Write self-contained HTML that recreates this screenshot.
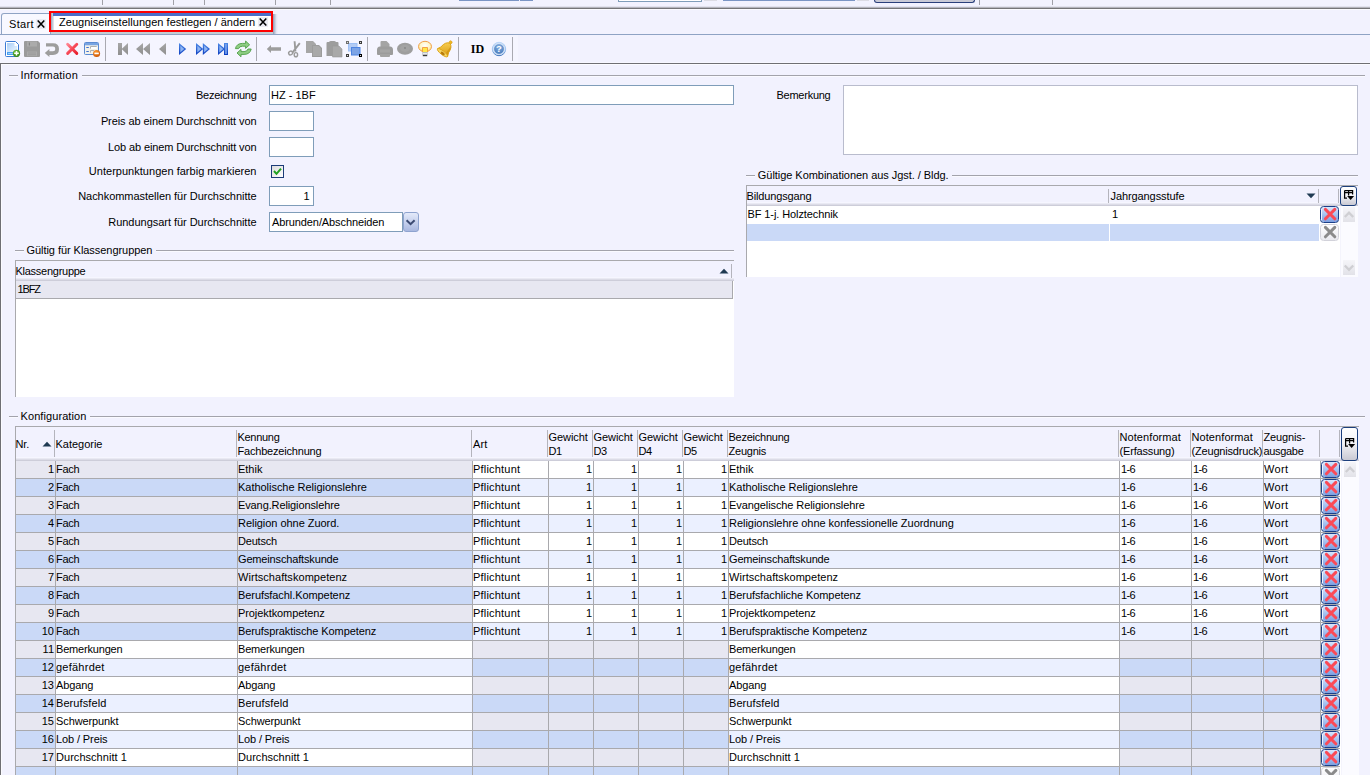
<!DOCTYPE html>
<html><head><meta charset="utf-8"><title>Zeugniseinstellungen</title>
<style>
html,body{margin:0;padding:0;}
body{width:1370px;height:775px;overflow:hidden;position:relative;background:#f2f2fe;font-family:"Liberation Sans",sans-serif;font-size:11px;line-height:13px;color:#000;}
.t{position:absolute;white-space:nowrap;height:13px;line-height:13px;font-size:11px;}
svg{position:absolute;overflow:visible;}
</style></head><body>
<div style="position:absolute;left:102px;top:0px;width:1px;height:5px;background:#a0a0a8;"></div>
<div style="position:absolute;left:173px;top:0px;width:1px;height:5px;background:#a0a0a8;"></div>
<div style="position:absolute;left:204px;top:0px;width:1px;height:5px;background:#a0a0a8;"></div>
<div style="position:absolute;left:275px;top:0px;width:1px;height:5px;background:#a0a0a8;"></div>
<div style="position:absolute;left:330px;top:0px;width:1px;height:5px;background:#a0a0a8;"></div>
<div style="position:absolute;left:979px;top:0px;width:1px;height:5px;background:#a0a0a8;"></div>
<div style="position:absolute;left:1052px;top:0px;width:1px;height:5px;background:#a0a0a8;"></div>
<div style="position:absolute;left:459px;top:0px;width:60px;height:1px;background:#7b95c4;"></div>
<div style="position:absolute;left:520px;top:0px;width:13px;height:1px;background:#7b95c4;"></div>
<div style="position:absolute;left:618px;top:0px;width:84px;height:2px;background:#fff;border:1px solid #7f9db9;border-top:0;box-sizing:border-box;"></div>
<div style="position:absolute;left:704px;top:0px;width:13px;height:1px;background:#dcdce4;"></div>
<div style="position:absolute;left:723px;top:0px;width:132px;height:1px;background:#7b95c4;"></div>
<div style="position:absolute;left:857px;top:0px;width:12px;height:1px;background:#dcdce4;"></div>
<div style="position:absolute;left:874px;top:0px;width:101px;height:3px;background:#c9cad6;border:1px solid #2a3f7a;border-top:0;border-radius:0 0 3px 3px;box-sizing:border-box;"></div>
<div style="position:absolute;left:0px;top:6px;width:1370px;height:1px;background:#e2e2ee;"></div>
<div style="position:absolute;left:0px;top:7px;width:1370px;height:1px;background:#b4b4bc;"></div>
<div style="position:absolute;left:0px;top:8px;width:1370px;height:1px;background:#757578;"></div>
<div style="position:absolute;left:0px;top:9px;width:1370px;height:1px;background:#fafaff;"></div>
<div style="position:absolute;left:0px;top:34px;width:1370px;height:1px;background:#8fa3c4;"></div>
<div style="position:absolute;left:1px;top:13px;width:50px;height:21px;background:#f8f8ff;border:1px solid #8fa3c4;border-bottom:0;border-radius:3px 0 0 0;box-sizing:border-box;"></div>
<div class="t" style="left:9px;top:18px;letter-spacing:0.350px;">Start</div>
<div style="position:absolute;left:51px;top:13px;width:222px;height:21px;background:#fff;"></div>
<div style="position:absolute;left:51px;top:13px;width:3px;height:21px;background:linear-gradient(90deg,#9aa6b8,#e8ecf2);"></div>
<div style="position:absolute;left:53px;top:13px;width:220px;height:3px;background:#4c6fc9;"></div>
<div style="position:absolute;left:51px;top:32px;width:224px;height:2px;background:#c3cdd4;"></div>
<div style="position:absolute;left:273px;top:14px;width:5px;height:20px;background:linear-gradient(90deg,#8e9ab4 0%,#bcc3d6 35%,#e4e6f4 70%,#f2f2fe 100%);"></div>
<div class="t" style="left:59px;top:16px;letter-spacing:0.027px;">Zeugniseinstellungen festlegen / ändern</div>
<div style="position:absolute;left:49px;top:11px;width:224px;height:21px;background:transparent;border:2px solid #fe0000;box-sizing:border-box;"></div>
<div style="position:absolute;left:0px;top:35px;width:518px;height:27px;background:#f5f5ff;"></div>
<div style="position:absolute;left:0px;top:62px;width:1370px;height:1px;background:#f7f7ff;"></div>
<div style="position:absolute;left:105px;top:37px;width:1px;height:24px;background:#a9a9b1;"></div>
<div style="position:absolute;left:256px;top:37px;width:1px;height:24px;background:#a9a9b1;"></div>
<div style="position:absolute;left:367px;top:37px;width:1px;height:24px;background:#a9a9b1;"></div>
<div style="position:absolute;left:458px;top:37px;width:1px;height:24px;background:#a9a9b1;"></div>
<div style="position:absolute;left:512px;top:37px;width:1px;height:24px;background:#a9a9b1;"></div>
<div style="position:absolute;left:0px;top:63px;width:1370px;height:1px;background:#6f6f73;"></div>
<div style="position:absolute;left:0px;top:63px;width:1px;height:712px;background:#6f6f73;"></div>
<div style="position:absolute;left:1px;top:64px;width:1369px;height:1px;background:#fbfbff;"></div>
<div style="position:absolute;left:1px;top:64px;width:1px;height:711px;background:#fbfbff;"></div>
<div style="position:absolute;left:9px;top:75px;width:9px;height:1px;background:#a3a3ab;"></div>
<div class="t" style="left:20.5px;top:69px;letter-spacing:0.222px;">Information</div>
<div style="position:absolute;left:82px;top:75px;width:1283px;height:1px;background:#a3a3ab;"></div>
<div style="position:absolute;left:82px;top:76px;width:1283px;height:1px;background:#fafaff;"></div>
<div style="position:absolute;left:9px;top:76px;width:9px;height:1px;background:#fafaff;"></div>
<div style="position:absolute;left:15px;top:250px;width:9px;height:1px;background:#a3a3ab;"></div>
<div class="t" style="left:26.5px;top:244px;letter-spacing:-0.051px;">Gültig für Klassengruppen</div>
<div style="position:absolute;left:156px;top:250px;width:578px;height:1px;background:#a3a3ab;"></div>
<div style="position:absolute;left:156px;top:251px;width:578px;height:1px;background:#fafaff;"></div>
<div style="position:absolute;left:15px;top:251px;width:9px;height:1px;background:#fafaff;"></div>
<div style="position:absolute;left:9px;top:416px;width:9px;height:1px;background:#a3a3ab;"></div>
<div class="t" style="left:20.5px;top:410px;letter-spacing:0.087px;">Konfiguration</div>
<div style="position:absolute;left:90px;top:416px;width:1275px;height:1px;background:#a3a3ab;"></div>
<div style="position:absolute;left:90px;top:417px;width:1275px;height:1px;background:#fafaff;"></div>
<div style="position:absolute;left:9px;top:417px;width:9px;height:1px;background:#fafaff;"></div>
<div style="position:absolute;left:746px;top:175px;width:9px;height:1px;background:#a3a3ab;"></div>
<div class="t" style="left:757.8px;top:169px;letter-spacing:-0.046px;">Gültige Kombinationen aus Jgst. / Bldg.</div>
<div style="position:absolute;left:952px;top:175px;width:406px;height:1px;background:#a3a3ab;"></div>
<div style="position:absolute;left:952px;top:176px;width:406px;height:1px;background:#fafaff;"></div>
<div style="position:absolute;left:746px;top:176px;width:9px;height:1px;background:#fafaff;"></div>
<div class="t" style="right:1113.5px;top:89px;letter-spacing:-0.287px;">Bezeichnung</div>
<div class="t" style="right:1113.5px;top:115px;letter-spacing:-0.088px;">Preis ab einem Durchschnitt von</div>
<div class="t" style="right:1113.5px;top:141px;letter-spacing:-0.112px;">Lob ab einem Durchschnitt von</div>
<div class="t" style="right:1113.5px;top:165px;letter-spacing:0.024px;">Unterpunktungen farbig markieren</div>
<div class="t" style="right:1113.5px;top:190px;letter-spacing:-0.042px;">Nachkommastellen für Durchschnitte</div>
<div class="t" style="right:1113.5px;top:216px;letter-spacing:-0.034px;">Rundungsart für Durchschnitte</div>
<div style="position:absolute;left:269px;top:85px;width:465px;height:20px;background:#fff;border:1px solid #7f9db9;box-sizing:border-box;"></div>
<div class="t" style="left:271px;top:89px;">HZ - 1BF</div>
<div style="position:absolute;left:269px;top:111px;width:45px;height:20px;background:#fff;border:1px solid #7f9db9;box-sizing:border-box;"></div>
<div style="position:absolute;left:269px;top:137px;width:45px;height:20px;background:#fff;border:1px solid #7f9db9;box-sizing:border-box;"></div>
<div style="position:absolute;left:271px;top:165px;width:13px;height:13px;background:linear-gradient(135deg,#dcdcdc,#fff);border:1px solid #1c3c78;box-sizing:border-box;"></div>
<svg style="left:271px;top:165px" width="13" height="13"><path d="M3 6 L5.5 8.8 L10 3.6" fill="none" stroke="#21a121" stroke-width="2"/></svg>
<div style="position:absolute;left:269px;top:186px;width:45px;height:20px;background:#fff;border:1px solid #7f9db9;box-sizing:border-box;"></div>
<div class="t" style="right:1060.4px;top:190px;">1</div>
<div style="position:absolute;left:269px;top:212px;width:134px;height:20px;background:#fff;border:1px solid #7f9db9;box-sizing:border-box;"></div>
<div class="t" style="left:272px;top:216px;letter-spacing:-0.103px;">Abrunden/Abschneiden</div>
<div style="position:absolute;left:403px;top:212px;width:16px;height:20px;background:linear-gradient(180deg,#e4eafa,#a9b8e0);border:1px solid #8ea3cf;border-radius:3px;box-sizing:border-box;"></div>
<svg style="left:403px;top:212px" width="16" height="20"><path d="M3.6 8.2 L7.6 12.2 L11.6 8.2" fill="none" stroke="#3b4a72" stroke-width="2"/></svg>
<div class="t" style="left:776.5px;top:89px;letter-spacing:-0.253px;">Bemerkung</div>
<div style="position:absolute;left:843px;top:85px;width:515px;height:70px;background:#fff;border:1px solid #b9bccd;box-sizing:border-box;"></div>
<div style="position:absolute;left:15px;top:260px;width:719px;height:137px;background:#fff;"></div>
<div style="position:absolute;left:15px;top:260px;width:1px;height:137px;background:#a9a9ad;"></div>
<div style="position:absolute;left:15px;top:260px;width:719px;height:1px;background:#a9a9ad;"></div>
<div style="position:absolute;left:15px;top:261px;width:719px;height:16px;background:#f2f2fe;"></div>
<div style="position:absolute;left:15px;top:277px;width:719px;height:1px;background:#f6f6ff;"></div>
<div style="position:absolute;left:15px;top:278px;width:719px;height:1px;background:#e9e9f3;"></div>
<div style="position:absolute;left:15px;top:279px;width:719px;height:1px;background:#dcdce7;"></div>
<div style="position:absolute;left:15px;top:280px;width:719px;height:1px;background:#cdcdd9;"></div>
<div style="position:absolute;left:15px;top:260px;width:1px;height:21px;background:#a9a9ad;"></div>
<div class="t" style="left:15.5px;top:265px;letter-spacing:-0.264px;">Klassengruppe</div>
<div style="position:absolute;left:731px;top:264px;width:1px;height:14px;background:#b4b4bc;"></div>
<svg style="left:719px;top:268px" width="10" height="6"><path d="M0.5 5.5 L5 0.8 L9.5 5.5 Z" fill="#1f3a52"/></svg>
<div style="position:absolute;left:16px;top:281px;width:717px;height:17px;background:#e7e7f1;"></div>
<div style="position:absolute;left:16px;top:298px;width:717px;height:1px;background:#a9a9ad;"></div>
<div style="position:absolute;left:732px;top:281px;width:1px;height:18px;background:#a9a9ad;"></div>
<div class="t" style="left:17.5px;top:283px;letter-spacing:-1.152px;">1BFZ</div>
<div style="position:absolute;left:746px;top:185px;width:612px;height:92px;background:#fff;"></div>
<div style="position:absolute;left:746px;top:185px;width:612px;height:1px;background:#a9a9ad;"></div>
<div style="position:absolute;left:746px;top:186px;width:612px;height:16px;background:#f2f2fe;"></div>
<div style="position:absolute;left:746px;top:202px;width:612px;height:1px;background:#f6f6ff;"></div>
<div style="position:absolute;left:746px;top:203px;width:612px;height:1px;background:#e9e9f3;"></div>
<div style="position:absolute;left:746px;top:204px;width:612px;height:1px;background:#dcdce7;"></div>
<div style="position:absolute;left:746px;top:205px;width:612px;height:1px;background:#cdcdd9;"></div>
<div style="position:absolute;left:746px;top:185px;width:1px;height:92px;background:#a9a9ad;"></div>
<div class="t" style="left:746.5px;top:190px;letter-spacing:-0.143px;">Bildungsgang</div>
<div class="t" style="left:1110.5px;top:190px;letter-spacing:-0.092px;">Jahrgangsstufe</div>
<div style="position:absolute;left:1108px;top:189px;width:1px;height:14px;background:#b4b4bc;"></div>
<div style="position:absolute;left:1318px;top:189px;width:1px;height:14px;background:#b4b4bc;"></div>
<div style="position:absolute;left:1338px;top:189px;width:1px;height:14px;background:#b4b4bc;"></div>
<svg style="left:1306px;top:193px" width="10" height="6"><path d="M0.5 0.5 L9.5 0.5 L5 5.2 Z" fill="#1f3a52"/></svg>
<div class="t" style="left:747.5px;top:208px;letter-spacing:-0.097px;">BF 1-j. Holztechnik</div>
<div class="t" style="left:1112px;top:208px;">1</div>
<div style="position:absolute;left:747px;top:224px;width:362px;height:17px;background:#cad9f7;"></div>
<div style="position:absolute;left:1110px;top:224px;width:209px;height:17px;background:#cad9f7;"></div>
<div style="position:absolute;left:1109px;top:206px;width:1px;height:36px;background:#fff;"></div>
<div style="position:absolute;left:1340px;top:186px;width:17px;height:20px;background:linear-gradient(180deg,#ffffff 0%,#f4f4f8 45%,#c9c9d3 100%);border:1px solid #1c3f7c;border-radius:3px;box-sizing:border-box;"></div>
<svg style="left:1344px;top:190px" width="11" height="11"><path d="M0.6 0.6 H8.6 V4.6 M0.6 0.6 V8 H3 M0.6 2.6 H8.6 M4.6 0.6 V5.6" fill="none" stroke="#000" stroke-width="1.25"/><path d="M3.1 6.1 H10.1 L6.6 10 Z" fill="#000"/></svg>
<div style="position:absolute;left:1320px;top:206px;width:19px;height:17px;background:linear-gradient(180deg,#d9e6fc 0%,#a7c2f0 50%,#7c9fe0 100%);border:1px solid #1c4088;border-radius:3.5px;box-sizing:border-box;box-shadow:inset 1px 0 0 #eef4ff;"></div>
<svg style="left:1320px;top:206px" width="19" height="17"><path d="M5.4 3.4 L14.8 12.8 M14.8 3.4 L5.4 12.8" fill="none" stroke="#fb4a56" stroke-width="3" stroke-linecap="round"/></svg>
<div style="position:absolute;left:1320px;top:224px;width:19px;height:17px;background:linear-gradient(180deg,#ffffff,#e9e9ef);border:1px solid #d2d2da;border-radius:3.5px;box-sizing:border-box;"></div>
<svg style="left:1320px;top:224px" width="19" height="17"><path d="M5.4 3.4 L14.8 12.8 M14.8 3.4 L5.4 12.8" fill="none" stroke="#8b8b8b" stroke-width="3" stroke-linecap="round"/></svg>
<div style="position:absolute;left:1340px;top:206px;width:18px;height:71px;background:#fbfbff;"></div>
<div style="position:absolute;left:1340px;top:206px;width:1px;height:71px;background:#f4f4fc;"></div>
<div style="position:absolute;left:1343px;top:207px;width:12px;height:15px;background:linear-gradient(180deg,#f5f5f9,#e2e2e8);"></div>
<svg style="left:1343px;top:207px" width="12" height="15"><path d="M1.8 10 L6 5.6 L10.2 10" fill="none" stroke="#cfcfd3" stroke-width="2.3"/></svg>
<div style="position:absolute;left:1343px;top:260px;width:12px;height:15px;background:linear-gradient(180deg,#f5f5f9,#e2e2e8);"></div>
<svg style="left:1343px;top:260px" width="12" height="15"><path d="M1.8 5.5 L6 9.9 L10.2 5.5" fill="none" stroke="#cfcfd3" stroke-width="2.3"/></svg>
<div style="position:absolute;left:15px;top:426px;width:1343px;height:349px;background:#fff;"></div>
<div style="position:absolute;left:15px;top:426px;width:1344px;height:1px;background:#a9a9ad;"></div>
<div style="position:absolute;left:15px;top:427px;width:1344px;height:30px;background:#f2f2fe;"></div>
<div style="position:absolute;left:15px;top:457px;width:1344px;height:1px;background:#f6f6ff;"></div>
<div style="position:absolute;left:15px;top:458px;width:1344px;height:1px;background:#e9e9f3;"></div>
<div style="position:absolute;left:15px;top:459px;width:1344px;height:1px;background:#dcdce7;"></div>
<div style="position:absolute;left:15px;top:460px;width:1344px;height:1px;background:#cdcdd9;"></div>
<div style="position:absolute;left:15px;top:426px;width:1px;height:349px;background:#a9a9ad;"></div>
<div style="position:absolute;left:54px;top:430px;width:1px;height:27px;background:#b4b4bc;"></div>
<div style="position:absolute;left:236px;top:430px;width:1px;height:27px;background:#b4b4bc;"></div>
<div style="position:absolute;left:471px;top:430px;width:1px;height:27px;background:#b4b4bc;"></div>
<div style="position:absolute;left:547px;top:430px;width:1px;height:27px;background:#b4b4bc;"></div>
<div style="position:absolute;left:592px;top:430px;width:1px;height:27px;background:#b4b4bc;"></div>
<div style="position:absolute;left:637px;top:430px;width:1px;height:27px;background:#b4b4bc;"></div>
<div style="position:absolute;left:682px;top:430px;width:1px;height:27px;background:#b4b4bc;"></div>
<div style="position:absolute;left:727px;top:430px;width:1px;height:27px;background:#b4b4bc;"></div>
<div style="position:absolute;left:1118px;top:430px;width:1px;height:27px;background:#b4b4bc;"></div>
<div style="position:absolute;left:1190px;top:430px;width:1px;height:27px;background:#b4b4bc;"></div>
<div style="position:absolute;left:1262px;top:430px;width:1px;height:27px;background:#b4b4bc;"></div>
<div style="position:absolute;left:1319px;top:430px;width:1px;height:27px;background:#b4b4bc;"></div>
<div style="position:absolute;left:1339px;top:430px;width:1px;height:27px;background:#b4b4bc;"></div>
<div class="t" style="left:15.5px;top:438px;letter-spacing:-0.182px;">Nr.</div>
<svg style="left:42px;top:441px" width="10" height="6"><path d="M0.5 5.5 L5 0.8 L9.5 5.5 Z" fill="#1f3a52"/></svg>
<div class="t" style="left:55.5px;top:438px;letter-spacing:-0.014px;">Kategorie</div>
<div class="t" style="left:237.5px;top:431px;letter-spacing:-0.299px;">Kennung</div>
<div class="t" style="left:237.5px;top:445px;letter-spacing:-0.194px;">Fachbezeichnung</div>
<div class="t" style="left:473px;top:438px;letter-spacing:0.146px;">Art</div>
<div class="t" style="left:548.5px;top:431px;letter-spacing:-0.064px;">Gewicht</div>
<div class="t" style="left:548.5px;top:445px;letter-spacing:-0.531px;">D1</div>
<div class="t" style="left:593.5px;top:431px;letter-spacing:-0.064px;">Gewicht</div>
<div class="t" style="left:593.5px;top:445px;letter-spacing:-0.531px;">D3</div>
<div class="t" style="left:638.5px;top:431px;letter-spacing:-0.064px;">Gewicht</div>
<div class="t" style="left:638.5px;top:445px;letter-spacing:-0.531px;">D4</div>
<div class="t" style="left:683.5px;top:431px;letter-spacing:-0.064px;">Gewicht</div>
<div class="t" style="left:683.5px;top:445px;letter-spacing:-0.531px;">D5</div>
<div class="t" style="left:728.5px;top:431px;letter-spacing:-0.241px;">Bezeichnung</div>
<div class="t" style="left:728.5px;top:445px;letter-spacing:-0.222px;">Zeugnis</div>
<div class="t" style="left:1119.5px;top:431px;letter-spacing:0.085px;">Notenformat</div>
<div class="t" style="left:1119.5px;top:445px;letter-spacing:-0.170px;">(Erfassung)</div>
<div class="t" style="left:1191.5px;top:431px;letter-spacing:0.085px;">Notenformat</div>
<div class="t" style="left:1191.5px;top:445px;letter-spacing:-0.184px;">(Zeugnisdruck)</div>
<div class="t" style="left:1263.5px;top:431px;letter-spacing:-0.127px;">Zeugnis-</div>
<div class="t" style="left:1263.5px;top:445px;letter-spacing:-0.321px;">ausgabe</div>
<div style="position:absolute;left:1341px;top:427px;width:17px;height:34px;background:linear-gradient(180deg,#ffffff 0%,#f4f4f8 45%,#c9c9d3 100%);border:1px solid #1c3f7c;border-radius:3px;box-sizing:border-box;"></div>
<svg style="left:1345px;top:438px" width="11" height="11"><path d="M0.6 0.6 H8.6 V4.6 M0.6 0.6 V8 H3 M0.6 2.6 H8.6 M4.6 0.6 V5.6" fill="none" stroke="#000" stroke-width="1.25"/><path d="M3.1 6.1 H10.1 L6.6 10 Z" fill="#000"/></svg>
<div style="position:absolute;left:16px;top:461px;width:39px;height:17px;background:#e7e7f1;"></div>
<div style="position:absolute;left:56px;top:461px;width:181px;height:17px;background:#e7e7f1;"></div>
<div style="position:absolute;left:238px;top:461px;width:234px;height:17px;background:#e7e7f1;"></div>
<div style="position:absolute;left:473px;top:461px;width:75px;height:17px;background:#ffffff;"></div>
<div style="position:absolute;left:549px;top:461px;width:44px;height:17px;background:#ffffff;"></div>
<div style="position:absolute;left:594px;top:461px;width:44px;height:17px;background:#ffffff;"></div>
<div style="position:absolute;left:639px;top:461px;width:44px;height:17px;background:#ffffff;"></div>
<div style="position:absolute;left:684px;top:461px;width:44px;height:17px;background:#ffffff;"></div>
<div style="position:absolute;left:729px;top:461px;width:390px;height:17px;background:#ffffff;"></div>
<div style="position:absolute;left:1120px;top:461px;width:71px;height:17px;background:#ffffff;"></div>
<div style="position:absolute;left:1192px;top:461px;width:71px;height:17px;background:#ffffff;"></div>
<div style="position:absolute;left:1264px;top:461px;width:56px;height:17px;background:#ffffff;"></div>
<div style="position:absolute;left:16px;top:478px;width:1324px;height:1px;background:#a9a9ad;"></div>
<div class="t" style="right:1316px;top:463px;">1</div>
<div class="t" style="left:56px;top:463px;letter-spacing:-0.317px;">Fach</div>
<div class="t" style="left:238px;top:463px;letter-spacing:-0.014px;">Ethik</div>
<div class="t" style="left:729px;top:463px;letter-spacing:-0.014px;">Ethik</div>
<div class="t" style="left:473px;top:463px;letter-spacing:0.202px;">Pflichtunt</div>
<div class="t" style="right:778px;top:463px;">1</div>
<div class="t" style="right:733px;top:463px;">1</div>
<div class="t" style="right:688px;top:463px;">1</div>
<div class="t" style="right:643px;top:463px;">1</div>
<div class="t" style="left:1121px;top:463px;letter-spacing:-0.635px;">1-6</div>
<div class="t" style="left:1193px;top:463px;letter-spacing:-0.635px;">1-6</div>
<div class="t" style="left:1264px;top:463px;letter-spacing:0.346px;">Wort</div>
<div style="position:absolute;left:1321px;top:461px;width:19px;height:17px;background:linear-gradient(180deg,#d9e6fc 0%,#a7c2f0 50%,#7c9fe0 100%);border:1px solid #1c4088;border-radius:3.5px;box-sizing:border-box;box-shadow:inset 1px 0 0 #eef4ff;"></div>
<svg style="left:1321px;top:461px" width="19" height="17"><path d="M5.4 3.4 L14.8 12.8 M14.8 3.4 L5.4 12.8" fill="none" stroke="#fb4a56" stroke-width="3" stroke-linecap="round"/></svg>
<div style="position:absolute;left:16px;top:479px;width:39px;height:17px;background:#cad9f7;"></div>
<div style="position:absolute;left:56px;top:479px;width:181px;height:17px;background:#cad9f7;"></div>
<div style="position:absolute;left:238px;top:479px;width:234px;height:17px;background:#cad9f7;"></div>
<div style="position:absolute;left:473px;top:479px;width:75px;height:17px;background:#ebf0ff;"></div>
<div style="position:absolute;left:549px;top:479px;width:44px;height:17px;background:#ebf0ff;"></div>
<div style="position:absolute;left:594px;top:479px;width:44px;height:17px;background:#ebf0ff;"></div>
<div style="position:absolute;left:639px;top:479px;width:44px;height:17px;background:#ebf0ff;"></div>
<div style="position:absolute;left:684px;top:479px;width:44px;height:17px;background:#ebf0ff;"></div>
<div style="position:absolute;left:729px;top:479px;width:390px;height:17px;background:#ebf0ff;"></div>
<div style="position:absolute;left:1120px;top:479px;width:71px;height:17px;background:#ebf0ff;"></div>
<div style="position:absolute;left:1192px;top:479px;width:71px;height:17px;background:#ebf0ff;"></div>
<div style="position:absolute;left:1264px;top:479px;width:56px;height:17px;background:#ebf0ff;"></div>
<div style="position:absolute;left:16px;top:496px;width:1324px;height:1px;background:#a9a9ad;"></div>
<div class="t" style="right:1316px;top:481px;">2</div>
<div class="t" style="left:56px;top:481px;letter-spacing:-0.317px;">Fach</div>
<div class="t" style="left:238px;top:481px;letter-spacing:-0.030px;">Katholische Religionslehre</div>
<div class="t" style="left:729px;top:481px;letter-spacing:-0.030px;">Katholische Religionslehre</div>
<div class="t" style="left:473px;top:481px;letter-spacing:0.202px;">Pflichtunt</div>
<div class="t" style="right:778px;top:481px;">1</div>
<div class="t" style="right:733px;top:481px;">1</div>
<div class="t" style="right:688px;top:481px;">1</div>
<div class="t" style="right:643px;top:481px;">1</div>
<div class="t" style="left:1121px;top:481px;letter-spacing:-0.635px;">1-6</div>
<div class="t" style="left:1193px;top:481px;letter-spacing:-0.635px;">1-6</div>
<div class="t" style="left:1264px;top:481px;letter-spacing:0.346px;">Wort</div>
<div style="position:absolute;left:1321px;top:479px;width:19px;height:17px;background:linear-gradient(180deg,#d9e6fc 0%,#a7c2f0 50%,#7c9fe0 100%);border:1px solid #1c4088;border-radius:3.5px;box-sizing:border-box;box-shadow:inset 1px 0 0 #eef4ff;"></div>
<svg style="left:1321px;top:479px" width="19" height="17"><path d="M5.4 3.4 L14.8 12.8 M14.8 3.4 L5.4 12.8" fill="none" stroke="#fb4a56" stroke-width="3" stroke-linecap="round"/></svg>
<div style="position:absolute;left:16px;top:497px;width:39px;height:17px;background:#e7e7f1;"></div>
<div style="position:absolute;left:56px;top:497px;width:181px;height:17px;background:#e7e7f1;"></div>
<div style="position:absolute;left:238px;top:497px;width:234px;height:17px;background:#e7e7f1;"></div>
<div style="position:absolute;left:473px;top:497px;width:75px;height:17px;background:#ffffff;"></div>
<div style="position:absolute;left:549px;top:497px;width:44px;height:17px;background:#ffffff;"></div>
<div style="position:absolute;left:594px;top:497px;width:44px;height:17px;background:#ffffff;"></div>
<div style="position:absolute;left:639px;top:497px;width:44px;height:17px;background:#ffffff;"></div>
<div style="position:absolute;left:684px;top:497px;width:44px;height:17px;background:#ffffff;"></div>
<div style="position:absolute;left:729px;top:497px;width:390px;height:17px;background:#ffffff;"></div>
<div style="position:absolute;left:1120px;top:497px;width:71px;height:17px;background:#ffffff;"></div>
<div style="position:absolute;left:1192px;top:497px;width:71px;height:17px;background:#ffffff;"></div>
<div style="position:absolute;left:1264px;top:497px;width:56px;height:17px;background:#ffffff;"></div>
<div style="position:absolute;left:16px;top:514px;width:1324px;height:1px;background:#a9a9ad;"></div>
<div class="t" style="right:1316px;top:499px;">3</div>
<div class="t" style="left:56px;top:499px;letter-spacing:-0.317px;">Fach</div>
<div class="t" style="left:238px;top:499px;letter-spacing:-0.110px;">Evang.Religionslehre</div>
<div class="t" style="left:729px;top:499px;letter-spacing:-0.087px;">Evangelische Religionslehre</div>
<div class="t" style="left:473px;top:499px;letter-spacing:0.202px;">Pflichtunt</div>
<div class="t" style="right:778px;top:499px;">1</div>
<div class="t" style="right:733px;top:499px;">1</div>
<div class="t" style="right:688px;top:499px;">1</div>
<div class="t" style="right:643px;top:499px;">1</div>
<div class="t" style="left:1121px;top:499px;letter-spacing:-0.635px;">1-6</div>
<div class="t" style="left:1193px;top:499px;letter-spacing:-0.635px;">1-6</div>
<div class="t" style="left:1264px;top:499px;letter-spacing:0.346px;">Wort</div>
<div style="position:absolute;left:1321px;top:497px;width:19px;height:17px;background:linear-gradient(180deg,#d9e6fc 0%,#a7c2f0 50%,#7c9fe0 100%);border:1px solid #1c4088;border-radius:3.5px;box-sizing:border-box;box-shadow:inset 1px 0 0 #eef4ff;"></div>
<svg style="left:1321px;top:497px" width="19" height="17"><path d="M5.4 3.4 L14.8 12.8 M14.8 3.4 L5.4 12.8" fill="none" stroke="#fb4a56" stroke-width="3" stroke-linecap="round"/></svg>
<div style="position:absolute;left:16px;top:515px;width:39px;height:17px;background:#cad9f7;"></div>
<div style="position:absolute;left:56px;top:515px;width:181px;height:17px;background:#cad9f7;"></div>
<div style="position:absolute;left:238px;top:515px;width:234px;height:17px;background:#cad9f7;"></div>
<div style="position:absolute;left:473px;top:515px;width:75px;height:17px;background:#ebf0ff;"></div>
<div style="position:absolute;left:549px;top:515px;width:44px;height:17px;background:#ebf0ff;"></div>
<div style="position:absolute;left:594px;top:515px;width:44px;height:17px;background:#ebf0ff;"></div>
<div style="position:absolute;left:639px;top:515px;width:44px;height:17px;background:#ebf0ff;"></div>
<div style="position:absolute;left:684px;top:515px;width:44px;height:17px;background:#ebf0ff;"></div>
<div style="position:absolute;left:729px;top:515px;width:390px;height:17px;background:#ebf0ff;"></div>
<div style="position:absolute;left:1120px;top:515px;width:71px;height:17px;background:#ebf0ff;"></div>
<div style="position:absolute;left:1192px;top:515px;width:71px;height:17px;background:#ebf0ff;"></div>
<div style="position:absolute;left:1264px;top:515px;width:56px;height:17px;background:#ebf0ff;"></div>
<div style="position:absolute;left:16px;top:532px;width:1324px;height:1px;background:#a9a9ad;"></div>
<div class="t" style="right:1316px;top:517px;">4</div>
<div class="t" style="left:56px;top:517px;letter-spacing:-0.317px;">Fach</div>
<div class="t" style="left:238px;top:517px;letter-spacing:-0.039px;">Religion ohne Zuord.</div>
<div class="t" style="left:729px;top:517px;letter-spacing:-0.034px;">Religionslehre ohne konfessionelle Zuordnung</div>
<div class="t" style="left:473px;top:517px;letter-spacing:0.202px;">Pflichtunt</div>
<div class="t" style="right:778px;top:517px;">1</div>
<div class="t" style="right:733px;top:517px;">1</div>
<div class="t" style="right:688px;top:517px;">1</div>
<div class="t" style="right:643px;top:517px;">1</div>
<div class="t" style="left:1121px;top:517px;letter-spacing:-0.635px;">1-6</div>
<div class="t" style="left:1193px;top:517px;letter-spacing:-0.635px;">1-6</div>
<div class="t" style="left:1264px;top:517px;letter-spacing:0.346px;">Wort</div>
<div style="position:absolute;left:1321px;top:515px;width:19px;height:17px;background:linear-gradient(180deg,#d9e6fc 0%,#a7c2f0 50%,#7c9fe0 100%);border:1px solid #1c4088;border-radius:3.5px;box-sizing:border-box;box-shadow:inset 1px 0 0 #eef4ff;"></div>
<svg style="left:1321px;top:515px" width="19" height="17"><path d="M5.4 3.4 L14.8 12.8 M14.8 3.4 L5.4 12.8" fill="none" stroke="#fb4a56" stroke-width="3" stroke-linecap="round"/></svg>
<div style="position:absolute;left:16px;top:533px;width:39px;height:17px;background:#e7e7f1;"></div>
<div style="position:absolute;left:56px;top:533px;width:181px;height:17px;background:#e7e7f1;"></div>
<div style="position:absolute;left:238px;top:533px;width:234px;height:17px;background:#e7e7f1;"></div>
<div style="position:absolute;left:473px;top:533px;width:75px;height:17px;background:#ffffff;"></div>
<div style="position:absolute;left:549px;top:533px;width:44px;height:17px;background:#ffffff;"></div>
<div style="position:absolute;left:594px;top:533px;width:44px;height:17px;background:#ffffff;"></div>
<div style="position:absolute;left:639px;top:533px;width:44px;height:17px;background:#ffffff;"></div>
<div style="position:absolute;left:684px;top:533px;width:44px;height:17px;background:#ffffff;"></div>
<div style="position:absolute;left:729px;top:533px;width:390px;height:17px;background:#ffffff;"></div>
<div style="position:absolute;left:1120px;top:533px;width:71px;height:17px;background:#ffffff;"></div>
<div style="position:absolute;left:1192px;top:533px;width:71px;height:17px;background:#ffffff;"></div>
<div style="position:absolute;left:1264px;top:533px;width:56px;height:17px;background:#ffffff;"></div>
<div style="position:absolute;left:16px;top:550px;width:1324px;height:1px;background:#a9a9ad;"></div>
<div class="t" style="right:1316px;top:535px;">5</div>
<div class="t" style="left:56px;top:535px;letter-spacing:-0.317px;">Fach</div>
<div class="t" style="left:238px;top:535px;letter-spacing:-0.196px;">Deutsch</div>
<div class="t" style="left:729px;top:535px;letter-spacing:-0.196px;">Deutsch</div>
<div class="t" style="left:473px;top:535px;letter-spacing:0.202px;">Pflichtunt</div>
<div class="t" style="right:778px;top:535px;">1</div>
<div class="t" style="right:733px;top:535px;">1</div>
<div class="t" style="right:688px;top:535px;">1</div>
<div class="t" style="right:643px;top:535px;">1</div>
<div class="t" style="left:1121px;top:535px;letter-spacing:-0.635px;">1-6</div>
<div class="t" style="left:1193px;top:535px;letter-spacing:-0.635px;">1-6</div>
<div class="t" style="left:1264px;top:535px;letter-spacing:0.346px;">Wort</div>
<div style="position:absolute;left:1321px;top:533px;width:19px;height:17px;background:linear-gradient(180deg,#d9e6fc 0%,#a7c2f0 50%,#7c9fe0 100%);border:1px solid #1c4088;border-radius:3.5px;box-sizing:border-box;box-shadow:inset 1px 0 0 #eef4ff;"></div>
<svg style="left:1321px;top:533px" width="19" height="17"><path d="M5.4 3.4 L14.8 12.8 M14.8 3.4 L5.4 12.8" fill="none" stroke="#fb4a56" stroke-width="3" stroke-linecap="round"/></svg>
<div style="position:absolute;left:16px;top:551px;width:39px;height:17px;background:#cad9f7;"></div>
<div style="position:absolute;left:56px;top:551px;width:181px;height:17px;background:#cad9f7;"></div>
<div style="position:absolute;left:238px;top:551px;width:234px;height:17px;background:#cad9f7;"></div>
<div style="position:absolute;left:473px;top:551px;width:75px;height:17px;background:#ebf0ff;"></div>
<div style="position:absolute;left:549px;top:551px;width:44px;height:17px;background:#ebf0ff;"></div>
<div style="position:absolute;left:594px;top:551px;width:44px;height:17px;background:#ebf0ff;"></div>
<div style="position:absolute;left:639px;top:551px;width:44px;height:17px;background:#ebf0ff;"></div>
<div style="position:absolute;left:684px;top:551px;width:44px;height:17px;background:#ebf0ff;"></div>
<div style="position:absolute;left:729px;top:551px;width:390px;height:17px;background:#ebf0ff;"></div>
<div style="position:absolute;left:1120px;top:551px;width:71px;height:17px;background:#ebf0ff;"></div>
<div style="position:absolute;left:1192px;top:551px;width:71px;height:17px;background:#ebf0ff;"></div>
<div style="position:absolute;left:1264px;top:551px;width:56px;height:17px;background:#ebf0ff;"></div>
<div style="position:absolute;left:16px;top:568px;width:1324px;height:1px;background:#a9a9ad;"></div>
<div class="t" style="right:1316px;top:553px;">6</div>
<div class="t" style="left:56px;top:553px;letter-spacing:-0.317px;">Fach</div>
<div class="t" style="left:238px;top:553px;letter-spacing:-0.156px;">Gemeinschaftskunde</div>
<div class="t" style="left:729px;top:553px;letter-spacing:-0.156px;">Gemeinschaftskunde</div>
<div class="t" style="left:473px;top:553px;letter-spacing:0.202px;">Pflichtunt</div>
<div class="t" style="right:778px;top:553px;">1</div>
<div class="t" style="right:733px;top:553px;">1</div>
<div class="t" style="right:688px;top:553px;">1</div>
<div class="t" style="right:643px;top:553px;">1</div>
<div class="t" style="left:1121px;top:553px;letter-spacing:-0.635px;">1-6</div>
<div class="t" style="left:1193px;top:553px;letter-spacing:-0.635px;">1-6</div>
<div class="t" style="left:1264px;top:553px;letter-spacing:0.346px;">Wort</div>
<div style="position:absolute;left:1321px;top:551px;width:19px;height:17px;background:linear-gradient(180deg,#d9e6fc 0%,#a7c2f0 50%,#7c9fe0 100%);border:1px solid #1c4088;border-radius:3.5px;box-sizing:border-box;box-shadow:inset 1px 0 0 #eef4ff;"></div>
<svg style="left:1321px;top:551px" width="19" height="17"><path d="M5.4 3.4 L14.8 12.8 M14.8 3.4 L5.4 12.8" fill="none" stroke="#fb4a56" stroke-width="3" stroke-linecap="round"/></svg>
<div style="position:absolute;left:16px;top:569px;width:39px;height:17px;background:#e7e7f1;"></div>
<div style="position:absolute;left:56px;top:569px;width:181px;height:17px;background:#e7e7f1;"></div>
<div style="position:absolute;left:238px;top:569px;width:234px;height:17px;background:#e7e7f1;"></div>
<div style="position:absolute;left:473px;top:569px;width:75px;height:17px;background:#ffffff;"></div>
<div style="position:absolute;left:549px;top:569px;width:44px;height:17px;background:#ffffff;"></div>
<div style="position:absolute;left:594px;top:569px;width:44px;height:17px;background:#ffffff;"></div>
<div style="position:absolute;left:639px;top:569px;width:44px;height:17px;background:#ffffff;"></div>
<div style="position:absolute;left:684px;top:569px;width:44px;height:17px;background:#ffffff;"></div>
<div style="position:absolute;left:729px;top:569px;width:390px;height:17px;background:#ffffff;"></div>
<div style="position:absolute;left:1120px;top:569px;width:71px;height:17px;background:#ffffff;"></div>
<div style="position:absolute;left:1192px;top:569px;width:71px;height:17px;background:#ffffff;"></div>
<div style="position:absolute;left:1264px;top:569px;width:56px;height:17px;background:#ffffff;"></div>
<div style="position:absolute;left:16px;top:586px;width:1324px;height:1px;background:#a9a9ad;"></div>
<div class="t" style="right:1316px;top:571px;">7</div>
<div class="t" style="left:56px;top:571px;letter-spacing:-0.317px;">Fach</div>
<div class="t" style="left:238px;top:571px;letter-spacing:0.048px;">Wirtschaftskompetenz</div>
<div class="t" style="left:729px;top:571px;letter-spacing:0.048px;">Wirtschaftskompetenz</div>
<div class="t" style="left:473px;top:571px;letter-spacing:0.202px;">Pflichtunt</div>
<div class="t" style="right:778px;top:571px;">1</div>
<div class="t" style="right:733px;top:571px;">1</div>
<div class="t" style="right:688px;top:571px;">1</div>
<div class="t" style="right:643px;top:571px;">1</div>
<div class="t" style="left:1121px;top:571px;letter-spacing:-0.635px;">1-6</div>
<div class="t" style="left:1193px;top:571px;letter-spacing:-0.635px;">1-6</div>
<div class="t" style="left:1264px;top:571px;letter-spacing:0.346px;">Wort</div>
<div style="position:absolute;left:1321px;top:569px;width:19px;height:17px;background:linear-gradient(180deg,#d9e6fc 0%,#a7c2f0 50%,#7c9fe0 100%);border:1px solid #1c4088;border-radius:3.5px;box-sizing:border-box;box-shadow:inset 1px 0 0 #eef4ff;"></div>
<svg style="left:1321px;top:569px" width="19" height="17"><path d="M5.4 3.4 L14.8 12.8 M14.8 3.4 L5.4 12.8" fill="none" stroke="#fb4a56" stroke-width="3" stroke-linecap="round"/></svg>
<div style="position:absolute;left:16px;top:587px;width:39px;height:17px;background:#cad9f7;"></div>
<div style="position:absolute;left:56px;top:587px;width:181px;height:17px;background:#cad9f7;"></div>
<div style="position:absolute;left:238px;top:587px;width:234px;height:17px;background:#cad9f7;"></div>
<div style="position:absolute;left:473px;top:587px;width:75px;height:17px;background:#ebf0ff;"></div>
<div style="position:absolute;left:549px;top:587px;width:44px;height:17px;background:#ebf0ff;"></div>
<div style="position:absolute;left:594px;top:587px;width:44px;height:17px;background:#ebf0ff;"></div>
<div style="position:absolute;left:639px;top:587px;width:44px;height:17px;background:#ebf0ff;"></div>
<div style="position:absolute;left:684px;top:587px;width:44px;height:17px;background:#ebf0ff;"></div>
<div style="position:absolute;left:729px;top:587px;width:390px;height:17px;background:#ebf0ff;"></div>
<div style="position:absolute;left:1120px;top:587px;width:71px;height:17px;background:#ebf0ff;"></div>
<div style="position:absolute;left:1192px;top:587px;width:71px;height:17px;background:#ebf0ff;"></div>
<div style="position:absolute;left:1264px;top:587px;width:56px;height:17px;background:#ebf0ff;"></div>
<div style="position:absolute;left:16px;top:604px;width:1324px;height:1px;background:#a9a9ad;"></div>
<div class="t" style="right:1316px;top:589px;">8</div>
<div class="t" style="left:56px;top:589px;letter-spacing:-0.317px;">Fach</div>
<div class="t" style="left:238px;top:589px;letter-spacing:-0.077px;">Berufsfachl.Kompetenz</div>
<div class="t" style="left:729px;top:589px;letter-spacing:-0.080px;">Berufsfachliche Kompetenz</div>
<div class="t" style="left:473px;top:589px;letter-spacing:0.202px;">Pflichtunt</div>
<div class="t" style="right:778px;top:589px;">1</div>
<div class="t" style="right:733px;top:589px;">1</div>
<div class="t" style="right:688px;top:589px;">1</div>
<div class="t" style="right:643px;top:589px;">1</div>
<div class="t" style="left:1121px;top:589px;letter-spacing:-0.635px;">1-6</div>
<div class="t" style="left:1193px;top:589px;letter-spacing:-0.635px;">1-6</div>
<div class="t" style="left:1264px;top:589px;letter-spacing:0.346px;">Wort</div>
<div style="position:absolute;left:1321px;top:587px;width:19px;height:17px;background:linear-gradient(180deg,#d9e6fc 0%,#a7c2f0 50%,#7c9fe0 100%);border:1px solid #1c4088;border-radius:3.5px;box-sizing:border-box;box-shadow:inset 1px 0 0 #eef4ff;"></div>
<svg style="left:1321px;top:587px" width="19" height="17"><path d="M5.4 3.4 L14.8 12.8 M14.8 3.4 L5.4 12.8" fill="none" stroke="#fb4a56" stroke-width="3" stroke-linecap="round"/></svg>
<div style="position:absolute;left:16px;top:605px;width:39px;height:17px;background:#e7e7f1;"></div>
<div style="position:absolute;left:56px;top:605px;width:181px;height:17px;background:#e7e7f1;"></div>
<div style="position:absolute;left:238px;top:605px;width:234px;height:17px;background:#e7e7f1;"></div>
<div style="position:absolute;left:473px;top:605px;width:75px;height:17px;background:#ffffff;"></div>
<div style="position:absolute;left:549px;top:605px;width:44px;height:17px;background:#ffffff;"></div>
<div style="position:absolute;left:594px;top:605px;width:44px;height:17px;background:#ffffff;"></div>
<div style="position:absolute;left:639px;top:605px;width:44px;height:17px;background:#ffffff;"></div>
<div style="position:absolute;left:684px;top:605px;width:44px;height:17px;background:#ffffff;"></div>
<div style="position:absolute;left:729px;top:605px;width:390px;height:17px;background:#ffffff;"></div>
<div style="position:absolute;left:1120px;top:605px;width:71px;height:17px;background:#ffffff;"></div>
<div style="position:absolute;left:1192px;top:605px;width:71px;height:17px;background:#ffffff;"></div>
<div style="position:absolute;left:1264px;top:605px;width:56px;height:17px;background:#ffffff;"></div>
<div style="position:absolute;left:16px;top:622px;width:1324px;height:1px;background:#a9a9ad;"></div>
<div class="t" style="right:1316px;top:607px;">9</div>
<div class="t" style="left:56px;top:607px;letter-spacing:-0.317px;">Fach</div>
<div class="t" style="left:238px;top:607px;letter-spacing:-0.087px;">Projektkompetenz</div>
<div class="t" style="left:729px;top:607px;letter-spacing:-0.087px;">Projektkompetenz</div>
<div class="t" style="left:473px;top:607px;letter-spacing:0.202px;">Pflichtunt</div>
<div class="t" style="right:778px;top:607px;">1</div>
<div class="t" style="right:733px;top:607px;">1</div>
<div class="t" style="right:688px;top:607px;">1</div>
<div class="t" style="right:643px;top:607px;">1</div>
<div class="t" style="left:1121px;top:607px;letter-spacing:-0.635px;">1-6</div>
<div class="t" style="left:1193px;top:607px;letter-spacing:-0.635px;">1-6</div>
<div class="t" style="left:1264px;top:607px;letter-spacing:0.346px;">Wort</div>
<div style="position:absolute;left:1321px;top:605px;width:19px;height:17px;background:linear-gradient(180deg,#d9e6fc 0%,#a7c2f0 50%,#7c9fe0 100%);border:1px solid #1c4088;border-radius:3.5px;box-sizing:border-box;box-shadow:inset 1px 0 0 #eef4ff;"></div>
<svg style="left:1321px;top:605px" width="19" height="17"><path d="M5.4 3.4 L14.8 12.8 M14.8 3.4 L5.4 12.8" fill="none" stroke="#fb4a56" stroke-width="3" stroke-linecap="round"/></svg>
<div style="position:absolute;left:16px;top:623px;width:39px;height:17px;background:#cad9f7;"></div>
<div style="position:absolute;left:56px;top:623px;width:181px;height:17px;background:#cad9f7;"></div>
<div style="position:absolute;left:238px;top:623px;width:234px;height:17px;background:#cad9f7;"></div>
<div style="position:absolute;left:473px;top:623px;width:75px;height:17px;background:#ebf0ff;"></div>
<div style="position:absolute;left:549px;top:623px;width:44px;height:17px;background:#ebf0ff;"></div>
<div style="position:absolute;left:594px;top:623px;width:44px;height:17px;background:#ebf0ff;"></div>
<div style="position:absolute;left:639px;top:623px;width:44px;height:17px;background:#ebf0ff;"></div>
<div style="position:absolute;left:684px;top:623px;width:44px;height:17px;background:#ebf0ff;"></div>
<div style="position:absolute;left:729px;top:623px;width:390px;height:17px;background:#ebf0ff;"></div>
<div style="position:absolute;left:1120px;top:623px;width:71px;height:17px;background:#ebf0ff;"></div>
<div style="position:absolute;left:1192px;top:623px;width:71px;height:17px;background:#ebf0ff;"></div>
<div style="position:absolute;left:1264px;top:623px;width:56px;height:17px;background:#ebf0ff;"></div>
<div style="position:absolute;left:16px;top:640px;width:1324px;height:1px;background:#a9a9ad;"></div>
<div class="t" style="right:1316px;top:625px;">10</div>
<div class="t" style="left:56px;top:625px;letter-spacing:-0.317px;">Fach</div>
<div class="t" style="left:238px;top:625px;letter-spacing:-0.097px;">Berufspraktische Kompetenz</div>
<div class="t" style="left:729px;top:625px;letter-spacing:-0.097px;">Berufspraktische Kompetenz</div>
<div class="t" style="left:473px;top:625px;letter-spacing:0.202px;">Pflichtunt</div>
<div class="t" style="right:778px;top:625px;">1</div>
<div class="t" style="right:733px;top:625px;">1</div>
<div class="t" style="right:688px;top:625px;">1</div>
<div class="t" style="right:643px;top:625px;">1</div>
<div class="t" style="left:1121px;top:625px;letter-spacing:-0.635px;">1-6</div>
<div class="t" style="left:1193px;top:625px;letter-spacing:-0.635px;">1-6</div>
<div class="t" style="left:1264px;top:625px;letter-spacing:0.346px;">Wort</div>
<div style="position:absolute;left:1321px;top:623px;width:19px;height:17px;background:linear-gradient(180deg,#d9e6fc 0%,#a7c2f0 50%,#7c9fe0 100%);border:1px solid #1c4088;border-radius:3.5px;box-sizing:border-box;box-shadow:inset 1px 0 0 #eef4ff;"></div>
<svg style="left:1321px;top:623px" width="19" height="17"><path d="M5.4 3.4 L14.8 12.8 M14.8 3.4 L5.4 12.8" fill="none" stroke="#fb4a56" stroke-width="3" stroke-linecap="round"/></svg>
<div style="position:absolute;left:16px;top:641px;width:39px;height:17px;background:#e7e7f1;"></div>
<div style="position:absolute;left:56px;top:641px;width:181px;height:17px;background:#ffffff;"></div>
<div style="position:absolute;left:238px;top:641px;width:234px;height:17px;background:#ffffff;"></div>
<div style="position:absolute;left:473px;top:641px;width:75px;height:17px;background:#e7e7f1;"></div>
<div style="position:absolute;left:549px;top:641px;width:44px;height:17px;background:#e7e7f1;"></div>
<div style="position:absolute;left:594px;top:641px;width:44px;height:17px;background:#e7e7f1;"></div>
<div style="position:absolute;left:639px;top:641px;width:44px;height:17px;background:#e7e7f1;"></div>
<div style="position:absolute;left:684px;top:641px;width:44px;height:17px;background:#e7e7f1;"></div>
<div style="position:absolute;left:729px;top:641px;width:390px;height:17px;background:#ffffff;"></div>
<div style="position:absolute;left:1120px;top:641px;width:71px;height:17px;background:#e7e7f1;"></div>
<div style="position:absolute;left:1192px;top:641px;width:71px;height:17px;background:#e7e7f1;"></div>
<div style="position:absolute;left:1264px;top:641px;width:56px;height:17px;background:#e7e7f1;"></div>
<div style="position:absolute;left:16px;top:658px;width:1324px;height:1px;background:#a9a9ad;"></div>
<div class="t" style="right:1316px;top:643px;">11</div>
<div class="t" style="left:56px;top:643px;letter-spacing:-0.185px;">Bemerkungen</div>
<div class="t" style="left:238px;top:643px;letter-spacing:-0.185px;">Bemerkungen</div>
<div class="t" style="left:729px;top:643px;letter-spacing:-0.185px;">Bemerkungen</div>
<div style="position:absolute;left:1321px;top:641px;width:19px;height:17px;background:linear-gradient(180deg,#d9e6fc 0%,#a7c2f0 50%,#7c9fe0 100%);border:1px solid #1c4088;border-radius:3.5px;box-sizing:border-box;box-shadow:inset 1px 0 0 #eef4ff;"></div>
<svg style="left:1321px;top:641px" width="19" height="17"><path d="M5.4 3.4 L14.8 12.8 M14.8 3.4 L5.4 12.8" fill="none" stroke="#fb4a56" stroke-width="3" stroke-linecap="round"/></svg>
<div style="position:absolute;left:16px;top:659px;width:39px;height:17px;background:#cad9f7;"></div>
<div style="position:absolute;left:56px;top:659px;width:181px;height:17px;background:#ebf0ff;"></div>
<div style="position:absolute;left:238px;top:659px;width:234px;height:17px;background:#ebf0ff;"></div>
<div style="position:absolute;left:473px;top:659px;width:75px;height:17px;background:#cad9f7;"></div>
<div style="position:absolute;left:549px;top:659px;width:44px;height:17px;background:#cad9f7;"></div>
<div style="position:absolute;left:594px;top:659px;width:44px;height:17px;background:#cad9f7;"></div>
<div style="position:absolute;left:639px;top:659px;width:44px;height:17px;background:#cad9f7;"></div>
<div style="position:absolute;left:684px;top:659px;width:44px;height:17px;background:#cad9f7;"></div>
<div style="position:absolute;left:729px;top:659px;width:390px;height:17px;background:#ebf0ff;"></div>
<div style="position:absolute;left:1120px;top:659px;width:71px;height:17px;background:#cad9f7;"></div>
<div style="position:absolute;left:1192px;top:659px;width:71px;height:17px;background:#cad9f7;"></div>
<div style="position:absolute;left:1264px;top:659px;width:56px;height:17px;background:#cad9f7;"></div>
<div style="position:absolute;left:16px;top:676px;width:1324px;height:1px;background:#a9a9ad;"></div>
<div class="t" style="right:1316px;top:661px;">12</div>
<div class="t" style="left:56px;top:661px;letter-spacing:0.241px;">gefährdet</div>
<div class="t" style="left:238px;top:661px;letter-spacing:0.241px;">gefährdet</div>
<div class="t" style="left:729px;top:661px;letter-spacing:0.241px;">gefährdet</div>
<div style="position:absolute;left:1321px;top:659px;width:19px;height:17px;background:linear-gradient(180deg,#d9e6fc 0%,#a7c2f0 50%,#7c9fe0 100%);border:1px solid #1c4088;border-radius:3.5px;box-sizing:border-box;box-shadow:inset 1px 0 0 #eef4ff;"></div>
<svg style="left:1321px;top:659px" width="19" height="17"><path d="M5.4 3.4 L14.8 12.8 M14.8 3.4 L5.4 12.8" fill="none" stroke="#fb4a56" stroke-width="3" stroke-linecap="round"/></svg>
<div style="position:absolute;left:16px;top:677px;width:39px;height:17px;background:#e7e7f1;"></div>
<div style="position:absolute;left:56px;top:677px;width:181px;height:17px;background:#ffffff;"></div>
<div style="position:absolute;left:238px;top:677px;width:234px;height:17px;background:#ffffff;"></div>
<div style="position:absolute;left:473px;top:677px;width:75px;height:17px;background:#e7e7f1;"></div>
<div style="position:absolute;left:549px;top:677px;width:44px;height:17px;background:#e7e7f1;"></div>
<div style="position:absolute;left:594px;top:677px;width:44px;height:17px;background:#e7e7f1;"></div>
<div style="position:absolute;left:639px;top:677px;width:44px;height:17px;background:#e7e7f1;"></div>
<div style="position:absolute;left:684px;top:677px;width:44px;height:17px;background:#e7e7f1;"></div>
<div style="position:absolute;left:729px;top:677px;width:390px;height:17px;background:#ffffff;"></div>
<div style="position:absolute;left:1120px;top:677px;width:71px;height:17px;background:#e7e7f1;"></div>
<div style="position:absolute;left:1192px;top:677px;width:71px;height:17px;background:#e7e7f1;"></div>
<div style="position:absolute;left:1264px;top:677px;width:56px;height:17px;background:#e7e7f1;"></div>
<div style="position:absolute;left:16px;top:694px;width:1324px;height:1px;background:#a9a9ad;"></div>
<div class="t" style="right:1316px;top:679px;">13</div>
<div class="t" style="left:56px;top:679px;letter-spacing:-0.111px;">Abgang</div>
<div class="t" style="left:238px;top:679px;letter-spacing:-0.111px;">Abgang</div>
<div class="t" style="left:729px;top:679px;letter-spacing:-0.111px;">Abgang</div>
<div style="position:absolute;left:1321px;top:677px;width:19px;height:17px;background:linear-gradient(180deg,#d9e6fc 0%,#a7c2f0 50%,#7c9fe0 100%);border:1px solid #1c4088;border-radius:3.5px;box-sizing:border-box;box-shadow:inset 1px 0 0 #eef4ff;"></div>
<svg style="left:1321px;top:677px" width="19" height="17"><path d="M5.4 3.4 L14.8 12.8 M14.8 3.4 L5.4 12.8" fill="none" stroke="#fb4a56" stroke-width="3" stroke-linecap="round"/></svg>
<div style="position:absolute;left:16px;top:695px;width:39px;height:17px;background:#cad9f7;"></div>
<div style="position:absolute;left:56px;top:695px;width:181px;height:17px;background:#ebf0ff;"></div>
<div style="position:absolute;left:238px;top:695px;width:234px;height:17px;background:#ebf0ff;"></div>
<div style="position:absolute;left:473px;top:695px;width:75px;height:17px;background:#cad9f7;"></div>
<div style="position:absolute;left:549px;top:695px;width:44px;height:17px;background:#cad9f7;"></div>
<div style="position:absolute;left:594px;top:695px;width:44px;height:17px;background:#cad9f7;"></div>
<div style="position:absolute;left:639px;top:695px;width:44px;height:17px;background:#cad9f7;"></div>
<div style="position:absolute;left:684px;top:695px;width:44px;height:17px;background:#cad9f7;"></div>
<div style="position:absolute;left:729px;top:695px;width:390px;height:17px;background:#ebf0ff;"></div>
<div style="position:absolute;left:1120px;top:695px;width:71px;height:17px;background:#cad9f7;"></div>
<div style="position:absolute;left:1192px;top:695px;width:71px;height:17px;background:#cad9f7;"></div>
<div style="position:absolute;left:1264px;top:695px;width:56px;height:17px;background:#cad9f7;"></div>
<div style="position:absolute;left:16px;top:712px;width:1324px;height:1px;background:#a9a9ad;"></div>
<div class="t" style="right:1316px;top:697px;">14</div>
<div class="t" style="left:56px;top:697px;letter-spacing:0.084px;">Berufsfeld</div>
<div class="t" style="left:238px;top:697px;letter-spacing:0.084px;">Berufsfeld</div>
<div class="t" style="left:729px;top:697px;letter-spacing:0.084px;">Berufsfeld</div>
<div style="position:absolute;left:1321px;top:695px;width:19px;height:17px;background:linear-gradient(180deg,#d9e6fc 0%,#a7c2f0 50%,#7c9fe0 100%);border:1px solid #1c4088;border-radius:3.5px;box-sizing:border-box;box-shadow:inset 1px 0 0 #eef4ff;"></div>
<svg style="left:1321px;top:695px" width="19" height="17"><path d="M5.4 3.4 L14.8 12.8 M14.8 3.4 L5.4 12.8" fill="none" stroke="#fb4a56" stroke-width="3" stroke-linecap="round"/></svg>
<div style="position:absolute;left:16px;top:713px;width:39px;height:17px;background:#e7e7f1;"></div>
<div style="position:absolute;left:56px;top:713px;width:181px;height:17px;background:#ffffff;"></div>
<div style="position:absolute;left:238px;top:713px;width:234px;height:17px;background:#ffffff;"></div>
<div style="position:absolute;left:473px;top:713px;width:75px;height:17px;background:#e7e7f1;"></div>
<div style="position:absolute;left:549px;top:713px;width:44px;height:17px;background:#e7e7f1;"></div>
<div style="position:absolute;left:594px;top:713px;width:44px;height:17px;background:#e7e7f1;"></div>
<div style="position:absolute;left:639px;top:713px;width:44px;height:17px;background:#e7e7f1;"></div>
<div style="position:absolute;left:684px;top:713px;width:44px;height:17px;background:#e7e7f1;"></div>
<div style="position:absolute;left:729px;top:713px;width:390px;height:17px;background:#ffffff;"></div>
<div style="position:absolute;left:1120px;top:713px;width:71px;height:17px;background:#e7e7f1;"></div>
<div style="position:absolute;left:1192px;top:713px;width:71px;height:17px;background:#e7e7f1;"></div>
<div style="position:absolute;left:1264px;top:713px;width:56px;height:17px;background:#e7e7f1;"></div>
<div style="position:absolute;left:16px;top:730px;width:1324px;height:1px;background:#a9a9ad;"></div>
<div class="t" style="right:1316px;top:715px;">15</div>
<div class="t" style="left:56px;top:715px;letter-spacing:-0.102px;">Schwerpunkt</div>
<div class="t" style="left:238px;top:715px;letter-spacing:-0.102px;">Schwerpunkt</div>
<div class="t" style="left:729px;top:715px;letter-spacing:-0.102px;">Schwerpunkt</div>
<div style="position:absolute;left:1321px;top:713px;width:19px;height:17px;background:linear-gradient(180deg,#d9e6fc 0%,#a7c2f0 50%,#7c9fe0 100%);border:1px solid #1c4088;border-radius:3.5px;box-sizing:border-box;box-shadow:inset 1px 0 0 #eef4ff;"></div>
<svg style="left:1321px;top:713px" width="19" height="17"><path d="M5.4 3.4 L14.8 12.8 M14.8 3.4 L5.4 12.8" fill="none" stroke="#fb4a56" stroke-width="3" stroke-linecap="round"/></svg>
<div style="position:absolute;left:16px;top:731px;width:39px;height:17px;background:#cad9f7;"></div>
<div style="position:absolute;left:56px;top:731px;width:181px;height:17px;background:#ebf0ff;"></div>
<div style="position:absolute;left:238px;top:731px;width:234px;height:17px;background:#ebf0ff;"></div>
<div style="position:absolute;left:473px;top:731px;width:75px;height:17px;background:#cad9f7;"></div>
<div style="position:absolute;left:549px;top:731px;width:44px;height:17px;background:#cad9f7;"></div>
<div style="position:absolute;left:594px;top:731px;width:44px;height:17px;background:#cad9f7;"></div>
<div style="position:absolute;left:639px;top:731px;width:44px;height:17px;background:#cad9f7;"></div>
<div style="position:absolute;left:684px;top:731px;width:44px;height:17px;background:#cad9f7;"></div>
<div style="position:absolute;left:729px;top:731px;width:390px;height:17px;background:#ebf0ff;"></div>
<div style="position:absolute;left:1120px;top:731px;width:71px;height:17px;background:#cad9f7;"></div>
<div style="position:absolute;left:1192px;top:731px;width:71px;height:17px;background:#cad9f7;"></div>
<div style="position:absolute;left:1264px;top:731px;width:56px;height:17px;background:#cad9f7;"></div>
<div style="position:absolute;left:16px;top:748px;width:1324px;height:1px;background:#a9a9ad;"></div>
<div class="t" style="right:1316px;top:733px;">16</div>
<div class="t" style="left:56px;top:733px;letter-spacing:-0.111px;">Lob / Preis</div>
<div class="t" style="left:238px;top:733px;letter-spacing:-0.111px;">Lob / Preis</div>
<div class="t" style="left:729px;top:733px;letter-spacing:-0.111px;">Lob / Preis</div>
<div style="position:absolute;left:1321px;top:731px;width:19px;height:17px;background:linear-gradient(180deg,#d9e6fc 0%,#a7c2f0 50%,#7c9fe0 100%);border:1px solid #1c4088;border-radius:3.5px;box-sizing:border-box;box-shadow:inset 1px 0 0 #eef4ff;"></div>
<svg style="left:1321px;top:731px" width="19" height="17"><path d="M5.4 3.4 L14.8 12.8 M14.8 3.4 L5.4 12.8" fill="none" stroke="#fb4a56" stroke-width="3" stroke-linecap="round"/></svg>
<div style="position:absolute;left:16px;top:749px;width:39px;height:17px;background:#e7e7f1;"></div>
<div style="position:absolute;left:56px;top:749px;width:181px;height:17px;background:#ffffff;"></div>
<div style="position:absolute;left:238px;top:749px;width:234px;height:17px;background:#ffffff;"></div>
<div style="position:absolute;left:473px;top:749px;width:75px;height:17px;background:#e7e7f1;"></div>
<div style="position:absolute;left:549px;top:749px;width:44px;height:17px;background:#e7e7f1;"></div>
<div style="position:absolute;left:594px;top:749px;width:44px;height:17px;background:#e7e7f1;"></div>
<div style="position:absolute;left:639px;top:749px;width:44px;height:17px;background:#e7e7f1;"></div>
<div style="position:absolute;left:684px;top:749px;width:44px;height:17px;background:#e7e7f1;"></div>
<div style="position:absolute;left:729px;top:749px;width:390px;height:17px;background:#ffffff;"></div>
<div style="position:absolute;left:1120px;top:749px;width:71px;height:17px;background:#e7e7f1;"></div>
<div style="position:absolute;left:1192px;top:749px;width:71px;height:17px;background:#e7e7f1;"></div>
<div style="position:absolute;left:1264px;top:749px;width:56px;height:17px;background:#e7e7f1;"></div>
<div style="position:absolute;left:16px;top:766px;width:1324px;height:1px;background:#a9a9ad;"></div>
<div class="t" style="right:1316px;top:751px;">17</div>
<div class="t" style="left:56px;top:751px;letter-spacing:0.040px;">Durchschnitt 1</div>
<div class="t" style="left:238px;top:751px;letter-spacing:0.040px;">Durchschnitt 1</div>
<div class="t" style="left:729px;top:751px;letter-spacing:0.040px;">Durchschnitt 1</div>
<div style="position:absolute;left:1321px;top:749px;width:19px;height:17px;background:linear-gradient(180deg,#d9e6fc 0%,#a7c2f0 50%,#7c9fe0 100%);border:1px solid #1c4088;border-radius:3.5px;box-sizing:border-box;box-shadow:inset 1px 0 0 #eef4ff;"></div>
<svg style="left:1321px;top:749px" width="19" height="17"><path d="M5.4 3.4 L14.8 12.8 M14.8 3.4 L5.4 12.8" fill="none" stroke="#fb4a56" stroke-width="3" stroke-linecap="round"/></svg>
<div style="position:absolute;left:16px;top:767px;width:39px;height:17px;background:#cad9f7;"></div>
<div style="position:absolute;left:56px;top:767px;width:181px;height:17px;background:#cad9f7;"></div>
<div style="position:absolute;left:238px;top:767px;width:234px;height:17px;background:#cad9f7;"></div>
<div style="position:absolute;left:473px;top:767px;width:75px;height:17px;background:#cad9f7;"></div>
<div style="position:absolute;left:549px;top:767px;width:44px;height:17px;background:#cad9f7;"></div>
<div style="position:absolute;left:594px;top:767px;width:44px;height:17px;background:#cad9f7;"></div>
<div style="position:absolute;left:639px;top:767px;width:44px;height:17px;background:#cad9f7;"></div>
<div style="position:absolute;left:684px;top:767px;width:44px;height:17px;background:#cad9f7;"></div>
<div style="position:absolute;left:729px;top:767px;width:390px;height:17px;background:#cad9f7;"></div>
<div style="position:absolute;left:1120px;top:767px;width:71px;height:17px;background:#cad9f7;"></div>
<div style="position:absolute;left:1192px;top:767px;width:71px;height:17px;background:#cad9f7;"></div>
<div style="position:absolute;left:1264px;top:767px;width:56px;height:17px;background:#cad9f7;"></div>
<div style="position:absolute;left:16px;top:784px;width:1324px;height:1px;background:#a9a9ad;"></div>
<div style="position:absolute;left:1321px;top:767px;width:19px;height:17px;background:linear-gradient(180deg,#ffffff,#e9e9ef);border:1px solid #d2d2da;border-radius:3.5px;box-sizing:border-box;"></div>
<svg style="left:1321px;top:767px" width="19" height="17"><path d="M5.4 3.4 L14.8 12.8 M14.8 3.4 L5.4 12.8" fill="none" stroke="#8b8b8b" stroke-width="3" stroke-linecap="round"/></svg>
<div style="position:absolute;left:55px;top:461px;width:1px;height:314px;background:#a9a9ad;"></div>
<div style="position:absolute;left:237px;top:461px;width:1px;height:314px;background:#a9a9ad;"></div>
<div style="position:absolute;left:472px;top:461px;width:1px;height:314px;background:#a9a9ad;"></div>
<div style="position:absolute;left:548px;top:461px;width:1px;height:314px;background:#a9a9ad;"></div>
<div style="position:absolute;left:593px;top:461px;width:1px;height:314px;background:#a9a9ad;"></div>
<div style="position:absolute;left:638px;top:461px;width:1px;height:314px;background:#a9a9ad;"></div>
<div style="position:absolute;left:683px;top:461px;width:1px;height:314px;background:#a9a9ad;"></div>
<div style="position:absolute;left:728px;top:461px;width:1px;height:314px;background:#a9a9ad;"></div>
<div style="position:absolute;left:1119px;top:461px;width:1px;height:314px;background:#a9a9ad;"></div>
<div style="position:absolute;left:1191px;top:461px;width:1px;height:314px;background:#a9a9ad;"></div>
<div style="position:absolute;left:1263px;top:461px;width:1px;height:314px;background:#a9a9ad;"></div>
<div style="position:absolute;left:1320px;top:461px;width:1px;height:314px;background:#a9a9ad;"></div>
<div style="position:absolute;left:1320px;top:461px;width:1px;height:314px;background:#a9a9ad;"></div>
<div style="position:absolute;left:1341px;top:461px;width:18px;height:314px;background:#fbfbff;"></div>
<div style="position:absolute;left:1341px;top:461px;width:1px;height:314px;background:#f4f4fc;"></div>
<div style="position:absolute;left:1344px;top:462px;width:12px;height:15px;background:linear-gradient(180deg,#f5f5f9,#e2e2e8);"></div>
<svg style="left:1344px;top:462px" width="12" height="15"><path d="M1.8 10 L6 5.6 L10.2 10" fill="none" stroke="#cfcfd3" stroke-width="2.3"/></svg>
<svg style="left:0;top:0" width="530" height="64" viewBox="0 0 530 64"><defs><linearGradient id="gDoc" x1="0" y1="0" x2="1" y2="1"><stop offset="0" stop-color="#a9cdf6"/><stop offset="1" stop-color="#eef6ff"/></linearGradient><linearGradient id="gGr" x1="0" y1="0" x2="0" y2="1"><stop offset="0" stop-color="#a6a6a6"/><stop offset="1" stop-color="#8f8f8f"/></linearGradient><linearGradient id="gBl" x1="0" y1="0" x2="0" y2="1"><stop offset="0" stop-color="#4f8ae6"/><stop offset="1" stop-color="#0a3cc0"/></linearGradient><linearGradient id="gRd" x1="0" y1="0" x2="1" y2="1"><stop offset="0" stop-color="#ff8490"/><stop offset="0.5" stop-color="#f64856"/><stop offset="1" stop-color="#e8202e"/></linearGradient><radialGradient id="gBulb" cx="0.5" cy="0.4" r="0.6"><stop offset="0" stop-color="#ffffff"/><stop offset="0.6" stop-color="#fff6c8"/><stop offset="1" stop-color="#ffd870"/></radialGradient><linearGradient id="gBell" x1="0" y1="0" x2="1" y2="1"><stop offset="0" stop-color="#ffd860"/><stop offset="1" stop-color="#d89a10"/></linearGradient><radialGradient id="gHelp" cx="0.5" cy="0.3" r="0.8"><stop offset="0" stop-color="#86aee0"/><stop offset="1" stop-color="#3f74b8"/></radialGradient><linearGradient id="gHr" x1="0" y1="0" x2="0" y2="1"><stop offset="0" stop-color="#bcd6f8"/><stop offset="0.6" stop-color="#9cc0ee"/><stop offset="1" stop-color="#3f74bc"/></linearGradient><radialGradient id="gOr" cx="0.4" cy="0.3" r="0.8"><stop offset="0" stop-color="#ff9a30"/><stop offset="1" stop-color="#c85000"/></radialGradient><radialGradient id="gGn" cx="0.4" cy="0.3" r="0.8"><stop offset="0" stop-color="#6cc040"/><stop offset="1" stop-color="#2f8010"/></radialGradient></defs><rect x="36" y="19" width="10" height="10" fill="#e4e4ee" opacity="0.7"/><path d="M37.7 20.5 L44.3 27.5 M44.3 20.5 L37.7 27.5" stroke="#000" stroke-width="1.55" fill="none"/><rect x="258" y="17" width="10" height="10" fill="#e4e4ee" opacity="0.7"/><path d="M259.7 18.5 L266.3 25.5 M266.3 18.5 L259.7 25.5" stroke="#000" stroke-width="1.55" fill="none"/><path d="M6.5 41.5 H15.5 L18.5 44.5 V55.5 Q18.5 56.5 17.5 56.5 H6.5 Q5.5 56.5 5.5 55.5 V42.5 Q5.5 41.5 6.5 41.5 Z" fill="#ffffff" stroke="#3b7ad4" stroke-width="1"/><path d="M7 43 H14.5 V46 H17 V52 H7 Z" fill="url(#gDoc)"/><rect x="7" y="52" width="10" height="3" fill="#4aa0f0"/><rect x="8" y="53" width="6" height="1" fill="#9cd0ff"/><circle cx="16.5" cy="53.3" r="3.6" fill="url(#gGn)"/><path d="M16.5 51 V55.6 M14.2 53.3 H18.8" stroke="#fff" stroke-width="1.5"/><path d="M24 42 Q24 41 25 41 H38 L40 43 V56 Q40 57 39 57 H25 Q24 57 24 56 Z" fill="#9b9b9b"/><rect x="27" y="41.5" width="10" height="5" fill="#ababab"/><rect x="28.8" y="42.5" width="1.2" height="3" fill="#858585"/><rect x="27" y="51.5" width="10" height="4.5" fill="#aaaaaa"/><path d="M28 53 H36 M28 54.7 H36" stroke="#959595" stroke-width="0.7"/><path d="M46 43.2 H53 Q59 43.2 59 49 Q59 54.9 53 54.9 H49.4 V57 L44.8 53 L49.4 49 V51.2 H53 Q55.3 51.2 55.3 49 Q55.3 46.6 53 46.6 H46 Z" fill="#9d9d9d"/><path d="M67.6 44.2 L76.8 53.4 M76.8 44.2 L67.6 53.4" stroke="url(#gRd)" stroke-width="2.9" stroke-linecap="round" fill="none"/><rect x="84.5" y="42.5" width="14" height="12" rx="1" fill="#f4f2ea" stroke="#5b8bd3" stroke-width="1"/><rect x="85" y="43" width="13" height="2.3" fill="#78a4e2"/><path d="M86.3 47.5 H88.8 M86.3 51.5 H88.8" stroke="#3f6fd0" stroke-width="1.2"/><path d="M90.5 48.6 V46.5 H96.7 M90.5 52.6 V50.5 H94" stroke="#a8a8a8" stroke-width="0.9" fill="none"/><rect x="91" y="47" width="5.7" height="2" fill="#fff"/><circle cx="96.6" cy="53.4" r="3.5" fill="url(#gOr)"/><rect x="94.4" y="52.6" width="4.4" height="1.6" fill="#fff"/><rect x="118" y="43" width="4" height="12" fill="url(#gGr)"/><path d="M128 43 V55 L121.6 49 Z" fill="url(#gGr)"/><path d="M143 43 V55 L136 49 Z M150 43 V55 L143 49 Z" fill="url(#gGr)"/><path d="M166 43 V55 L159 49 Z" fill="url(#gGr)"/><path d="M179 43 V55 L186.2 49 Z" fill="url(#gBl)"/><path d="M180.3 45.4 V52.4 L184.2 49 Z" fill="#8db4f2"/><path d="M196 43 V55 L203.2 49 Z" fill="url(#gBl)"/><path d="M197.3 45.4 V52.4 L201.2 49 Z" fill="#8db4f2"/><path d="M202.8 43 V55 L210 49 Z" fill="url(#gBl)"/><path d="M204.1 45.4 V52.4 L208 49 Z" fill="#8db4f2"/><path d="M218 43 V55 L225.2 49 Z" fill="url(#gBl)"/><path d="M219.3 45.4 V52.4 L223.2 49 Z" fill="#8db4f2"/><rect x="224" y="43" width="4" height="12" fill="url(#gBl)"/><rect x="225.2" y="44" width="1.6" height="10" fill="#7ea6ee"/><path d="M235.4 48.6 Q236.6 43.4 242.5 43.4 H245.6 V41 L249.6 44.8 L245.6 48.4 V46.2 H242.5 Q239.4 46.2 238.6 48.6 Z" fill="#8fce84" stroke="#4e9e46" stroke-width="0.9"/><path d="M251.2 49 Q250 54.4 244.1 54.4 H241 V56.8 L237 53 L241 49.4 V51.6 H244.1 Q247.2 51.6 248 49 Z" fill="#8fce84" stroke="#4e9e46" stroke-width="0.9"/><path d="M266.8 49 L271 45 V47.2 H281 V50.8 H271 V53 Z" fill="#9d9d9d"/><path d="M294.6 41.2 L295.4 51.5 M299.8 43.2 L292.6 52.4" stroke="#9a9a9a" stroke-width="1.9" fill="none"/><ellipse cx="290.6" cy="53" rx="2" ry="1.8" fill="none" stroke="#9a9a9a" stroke-width="1.4" transform="rotate(-25 290.6 53)"/><ellipse cx="295.9" cy="54.7" rx="1.7" ry="2.1" fill="none" stroke="#9a9a9a" stroke-width="1.4"/><path d="M306 41 H313 L316 44 V53 H306 Z" fill="#a6a6a6"/><path d="M312 45 H319 L322 48 V57 H312 Z" fill="#9c9c9c"/><path d="M313 46 H318.5 L321 48.5 V56 H313 Z" fill="#a9a9a9"/><path d="M326.5 43 Q326.5 42 327.5 42 H329 Q329.5 41 331 41 H334 Q335.5 41 336 42 H337.5 Q338.5 42 338.5 43 V56 H326.5 Z" fill="#9d9d9d"/><path d="M332.5 46 H339 L342 49 V57 H332.5 Z" fill="#a9a9a9" stroke="#999" stroke-width="0.6"/><rect x="348.5" y="43.5" width="8.5" height="7.5" fill="#b4ccf4" stroke="#9ec0f6" stroke-width="1"/><rect x="351.5" y="47.5" width="8.5" height="7.5" fill="#7da4e6" stroke="#4e84e2" stroke-width="1"/><rect x="346" y="41" width="3" height="3" fill="#6e6e6e"/><rect x="347" y="42" width="1" height="1" fill="#ddd"/><rect x="359" y="41" width="3" height="3" fill="#3c3c3c"/><rect x="360" y="42" width="1" height="1" fill="#ddd"/><rect x="346" y="54" width="3" height="3" fill="#3c3c3c"/><rect x="347" y="55" width="1" height="1" fill="#ddd"/><rect x="359" y="54" width="3" height="3" fill="#000"/><rect x="360" y="55" width="1" height="1" fill="#ddd"/><path d="M380.5 48 V42 Q380.5 41 381.5 41 H386.5 L389.5 44 V48 Z" fill="#a4a4a4"/><path d="M377 50 Q377 46.5 380 46.5 H390 Q393 46.5 393 50 V54 Q393 55 392 55 H378 Q377 55 377 54 Z" fill="#9c9c9c"/><rect x="380" y="49.5" width="10" height="3" fill="#a6a6a6"/><path d="M380 54 H390 V56 Q390 57 389 57 H381 Q380 57 380 56 Z" fill="#a4a4a4"/><ellipse cx="405" cy="48.7" rx="8" ry="6" fill="#9e9e9e"/><ellipse cx="405" cy="48.3" rx="5" ry="3.6" fill="#a4a4a4"/><circle cx="405" cy="48" r="0.9" fill="#858585"/><ellipse cx="425" cy="46.6" rx="6.5" ry="5.3" fill="url(#gBulb)" stroke="#f0a04c" stroke-width="1"/><path d="M422.5 52 V47.5 H427.5 V52" fill="#ffe848" stroke="#f29a3c" stroke-width="0.9"/><rect x="422.3" y="52" width="5.4" height="3" fill="#b9bcc0"/><rect x="423" y="53" width="4" height="1" fill="#e8e8ea"/><rect x="422.8" y="55" width="4.4" height="1.2" fill="#3a3a3a"/><g transform="rotate(38 445 49.5)"><circle cx="445" cy="40.4" r="1.5" fill="#f0b820" stroke="#d89a10" stroke-width="0.6"/><path d="M445 41.6 Q449.4 42.6 449.8 50 L451.4 53.4 H438.6 L440.2 50 Q440.6 42.6 445 41.6 Z" fill="url(#gBell)" stroke="#dca418" stroke-width="0.9"/><path d="M447.5 43 Q449.4 46 449.8 50 L451.2 53.2 H448 Z" fill="#d09410" opacity="0.75"/><ellipse cx="445" cy="53.6" rx="6.3" ry="1.9" fill="#f6d868" stroke="#dca418" stroke-width="0.9"/><ellipse cx="445.6" cy="54" rx="2.4" ry="1.3" fill="#b87c0c"/></g><text x="470.8" y="53" font-family="Liberation Serif,serif" font-weight="bold" font-size="12px" textLength="13.4" lengthAdjust="spacingAndGlyphs" fill="#000">ID</text><circle cx="499" cy="49" r="6.7" fill="#c0d8f6" stroke="url(#gHr)" stroke-width="1"/><circle cx="499" cy="49" r="5.4" fill="url(#gHelp)" stroke="#eef4fc" stroke-width="0.8"/><text x="499" y="52.4" text-anchor="middle" font-family="Liberation Sans,sans-serif" font-weight="bold" font-size="9.5px" fill="#fff">?</text></svg>
</body></html>
